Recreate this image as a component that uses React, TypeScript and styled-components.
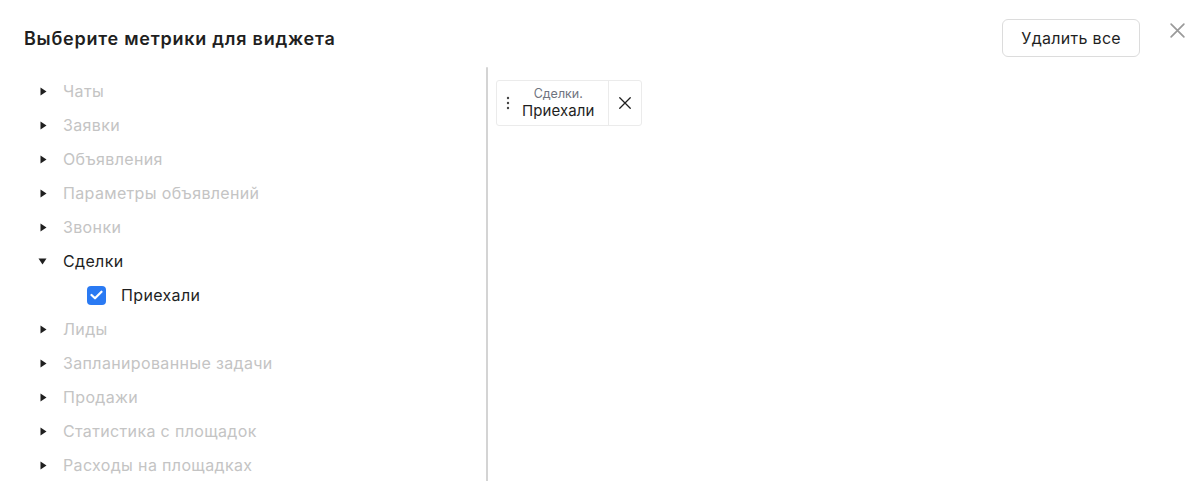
import React from "react";
import styled, { createGlobalStyle } from "styled-components";

const Global = createGlobalStyle`
  html, body { margin: 0; padding: 0; background: #fff; }
  body { font-family: Inter, "Noto Sans", sans-serif; color: #1f1f1f; }
  * { box-sizing: border-box; }
`;

const Page = styled.div`
  width: 1200px;
  height: 481px;
  overflow: hidden;
  display: flex;
  flex-direction: column;
  position: relative;
`;

const Header = styled.div`
  display: flex;
  align-items: center;
  justify-content: space-between;
  padding: 19px 60px 0 24px;
  height: 57px;
`;

const Title = styled.h2`
  margin: 0;
  font-size: 18px;
  font-weight: 600;
  letter-spacing: 0.75px;
  color: #1f1f1f;
`;

const OutlineButton = styled.button`
  height: 38px;
  padding: 0 18px;
  border: 1px solid #dcdcdc;
  border-radius: 6px;
  background: #fff;
  font-family: inherit;
  font-size: 16px;
  letter-spacing: 0.3px;
  color: #1f1f1f;
`;

const CloseButton = styled.button`
  position: absolute;
  top: 20px;
  right: 13px;
  width: 20px;
  height: 20px;
  padding: 0;
  border: none;
  background: none;
  display: flex;
  align-items: center;
  justify-content: center;
`;

const Body = styled.div`
  flex: 1;
  display: flex;
  margin-top: 10px;
`;

const LeftPane = styled.div`
  width: 486px;
  padding-top: 7px;
  display: flex;
  flex-direction: column;
`;

const Divider = styled.div`
  width: 2px;
  background: #d4d4d4;
  border-radius: 1px 1px 0 0;
`;

const RightPane = styled.div`
  flex: 1;
  padding: 13px 0 0 8px;
  display: flex;
  align-items: flex-start;
`;

const Row = styled.div<{ $indent?: number }>`
  height: 34px;
  display: flex;
  align-items: center;
  padding-left: ${(p) => p.$indent ?? 38}px;
`;

const Caret = styled.span<{ $open?: boolean }>`
  width: 10px;
  height: 10px;
  margin-right: 15px;
  display: flex;
  align-items: center;
  justify-content: center;
  transform: rotate(${(p) => (p.$open ? 90 : 0)}deg);
`;

const Label = styled.span<{ $muted?: boolean }>`
  font-size: 16px;
  letter-spacing: 0.35px;
  color: ${(p) => (p.$muted ? "#c4c4c4" : "#1f1f1f")};
`;

const Checkbox = styled.span`
  width: 19px;
  height: 19px;
  border-radius: 4px;
  background: #2a7af3;
  display: flex;
  align-items: center;
  justify-content: center;
  margin-right: 15px;
`;

const Chip = styled.div`
  display: flex;
  height: 46px;
  border: 1px solid #ebebeb;
  border-radius: 3px;
`;

const ChipMain = styled.div`
  display: flex;
  align-items: center;
  padding: 0 13px 0 9px;
  border-right: 1px solid #ebebeb;
`;

const Handle = styled.span`
  display: flex;
  margin-right: 12px;
`;

const ChipText = styled.div`
  display: flex;
  flex-direction: column;
  align-items: center;
  line-height: 1;
`;

const ChipGroup = styled.span`
  font-size: 12.5px;
  color: #6f7480;
  margin-bottom: 3px;
`;

const ChipName = styled.span`
  font-size: 15px;
  letter-spacing: 0.1px;
  color: #1f1f1f;
`;

const ChipRemove = styled.button`
  width: 32px;
  border: none;
  background: none;
  padding: 0;
  display: flex;
  align-items: center;
  justify-content: center;
`;

const TriangleIcon = () => (
  <svg width="7" height="9" viewBox="0 0 7 9">
    <path d="M0.5 0.5 L6.5 4.5 L0.5 8.5 Z" fill="#1f1f1f" />
  </svg>
);

const CrossIcon = ({ size, color, stroke }: { size: number; color: string; stroke: number }) => (
  <svg width={size} height={size} viewBox="0 0 16 16">
    <path d="M2 2 L14 14 M14 2 L2 14" stroke={color} strokeWidth={stroke} strokeLinecap="round" />
  </svg>
);

const groups = [
  "Чаты",
  "Заявки",
  "Объявления",
  "Параметры объявлений",
  "Звонки",
  "Сделки",
  "Лиды",
  "Запланированные задачи",
  "Продажи",
  "Статистика с площадок",
  "Расходы на площадках",
];

export default function App() {
  return (
    <Page>
      <Global />
      <Header>
        <Title>Выберите метрики для виджета</Title>
        <OutlineButton>Удалить все</OutlineButton>
      </Header>
      <CloseButton aria-label="Закрыть">
        <CrossIcon size={17} color="#9a9a9a" stroke={1.6} />
      </CloseButton>
      <Body>
        <LeftPane>
          {groups.map((g) => (
            <React.Fragment key={g}>
              <Row>
                <Caret $open={g === "Сделки"}>
                  <TriangleIcon />
                </Caret>
                <Label $muted={g !== "Сделки"}>{g}</Label>
              </Row>
              {g === "Сделки" && (
                <Row $indent={87}>
                  <Checkbox>
                    <svg width="13" height="10" viewBox="0 0 13 10">
                      <path d="M1.5 5 L5 8.3 L11.5 1.7" fill="none" stroke="#fff" strokeWidth="2.2" strokeLinecap="round" strokeLinejoin="round" />
                    </svg>
                  </Checkbox>
                  <Label>Приехали</Label>
                </Row>
              )}
            </React.Fragment>
          ))}
        </LeftPane>
        <Divider />
        <RightPane>
          <Chip>
            <ChipMain>
              <Handle>
                <svg width="4" height="14" viewBox="0 0 4 14">
                  <circle cx="2" cy="2" r="1.2" fill="#444" />
                  <circle cx="2" cy="7" r="1.2" fill="#444" />
                  <circle cx="2" cy="12" r="1.2" fill="#444" />
                </svg>
              </Handle>
              <ChipText>
                <ChipGroup>Сделки.</ChipGroup>
                <ChipName>Приехали</ChipName>
              </ChipText>
            </ChipMain>
            <ChipRemove aria-label="Удалить">
              <CrossIcon size={14} color="#1f1f1f" stroke={1.5} />
            </ChipRemove>
          </Chip>
        </RightPane>
      </Body>
    </Page>
  );
}
